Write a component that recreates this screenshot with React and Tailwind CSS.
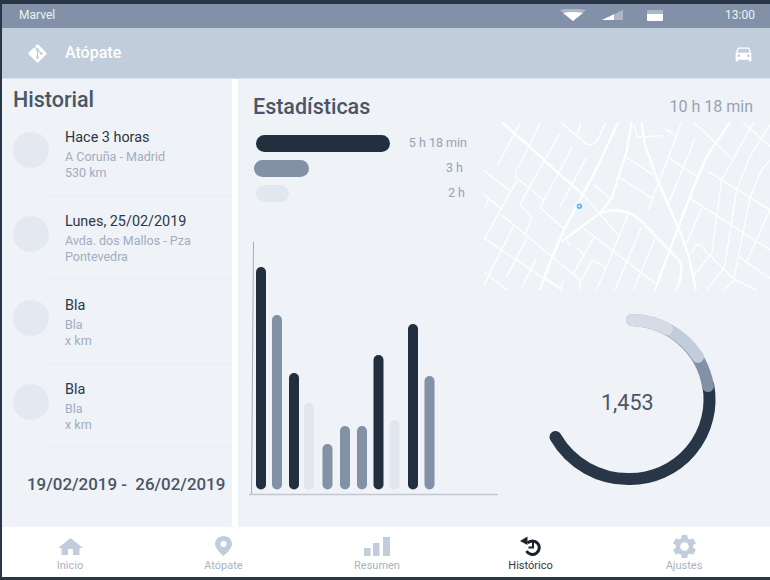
import { FaGitAlt } from "react-icons/fa";
import { MdDirectionsCar, MdSettings } from "react-icons/md";

const font = { fontFamily: "Roboto, sans-serif" };

const trips = [
  { title: "Hace 3 horas", lines: ["A Coruña - Madrid", "530 km"] },
  { title: "Lunes, 25/02/2019", lines: ["Avda. dos Mallos - Pza", "Pontevedra"] },
  { title: "Bla", lines: ["Bla", "x km"] },
  { title: "Bla", lines: ["Bla", "x km"] },
];

const chartBars = [
  [256, 267, "#222f3f"],
  [272, 315, "#8291a5"],
  [289, 373, "#222f3f"],
  [304, 403, "#e2e7ef"],
  [322.5, 444, "#8291a5"],
  [340, 426, "#8291a5"],
  [357, 426, "#8291a5"],
  [373.5, 355, "#222f3f"],
  [389.5, 420, "#e2e7ef"],
  [408, 324, "#222f3f"],
  [424.5, 376, "#8291a5"],
];

const thickRoads = [
  "M65 22L145 92L235 175L310 240",
  "M415 22L350 160L250 350L215 430L180 525",
  "M455 22L440 110L395 250L360 295L245 380",
  "M360 295Q410 275 460 300L490 325L600 440Q612 470 590 525",
  "M485 22L495 90L530 190L600 350L625 420L648 525",
  "M750 22L680 125L640 220L590 350L525 525",
];

const thinRoads = [
  "M122 22L52 152",
  "M182 22L108 170Q105 190 118 195L190 255",
  "M238 58L120 268L155 308L135 360",
  "M278 95L180 278L255 345",
  "M318 130L238 280",
  "M242 22L320 88Q335 95 350 80L378 22",
  "M302 22L292 60",
  "M12 168L95 232",
  "M112 195L15 370",
  "M12 240L68 285",
  "M25 255L12 285",
  "M62 298L300 495L300 525",
  "M12 370L240 522",
  "M100 335L12 510",
  "M140 370L78 490",
  "M168 433L125 518",
  "M12 470L80 525",
  "M195 490L245 522",
  "M250 498L242 525",
  "M310 340L525 505",
  "M340 370L280 478",
  "M290 398L310 418",
  "M262 378L272 395",
  "M335 435L378 458",
  "M335 435L302 500",
  "M310 240L415 360",
  "M340 208L390 250",
  "M445 298L350 525",
  "M485 335L405 525",
  "M525 372L460 525",
  "M440 128L520 180",
  "M418 188L515 250",
  "M605 22L505 285",
  "M555 42L585 60",
  "M645 72L565 268",
  "M568 130L655 188",
  "M462 30L472 68L548 62",
  "M642 22L755 132",
  "M820 22L725 195L695 420",
  "M870 30L810 125L770 225L733 460",
  "M870 135L845 165L810 250L762 490",
  "M788 22L870 95",
  "M688 172L870 285",
  "M632 252L870 405",
  "M665 280L620 385",
  "M655 385L730 462L765 495L830 525",
  "M655 385L628 420",
  "M692 420L640 482",
  "M730 462L680 525",
  "M765 495L732 525",
  "M775 425L870 490",
  "M870 285L800 440",
];

function StatusBar() {
  return (
    <div className="flex h-6 items-center bg-[#8291a8] pb-[2px] pl-[17px] pr-[15px] text-xs text-[#eef1f6]">
      <span>Marvel</span>
      <div className="ml-auto mr-[62px] flex items-center">
        <svg width="26" height="12" viewBox="0 0 26 12">
          <path d="M0 1Q13 -2 26 1L13 12Z" fill="#fff" opacity="0.35" />
          <path d="M3 4Q13 2 23 4L13 12Z" fill="#fff" />
        </svg>
        <svg width="22" height="10" viewBox="0 0 22 10" className="ml-4">
          <path d="M0 10L21 0V10Z" fill="#fff" opacity="0.35" />
          <path d="M0 10L12 4.3V10Z" fill="#fff" />
        </svg>
        <svg width="16" height="11" viewBox="0 0 16 11" className="ml-[23px]">
          <rect width="16" height="11" rx="1" fill="#fff" opacity="0.35" />
          <path d="M0 4H16V10Q16 11 15 11H1Q0 11 0 10Z" fill="#fff" />
        </svg>
      </div>
      <span>13:00</span>
    </div>
  );
}

function AppBar() {
  return (
    <div className="flex h-[51px] items-center border-b border-[#d9e0e9] bg-[#c1cddb] pl-[25px] pr-4 text-white">
      <FaGitAlt size={21} />
      <span className="ml-[17px] text-base font-medium">Atópate</span>
      <MdDirectionsCar size={21} className="ml-auto" />
    </div>
  );
}

function HistoryPanel() {
  return (
    <aside className="flex w-[230px] shrink-0 flex-col bg-[#eff2f7]">
      <h2 className="pl-[11px] pt-[6px] text-[21.5px] leading-[29px] font-medium text-[#4a5565]">Historial</h2>
      <ul className="-mt-[2px]">
        {trips.map((trip, i) => (
          <li key={i} className="relative flex h-[84px] gap-[16px] pl-[11px] pt-4">
            <div className="mt-1 h-9 w-9 shrink-0 rounded-full bg-[#e4e9f1]" />
            <div>
              <div className="text-[14.4px] leading-[20px] text-[#2d3748]">{trip.title}</div>
              <div className="mt-[1px] text-[12.5px] leading-4 text-[#a0aec0]">
                {trip.lines.map((line, j) => (
                  <div key={j}>{line}</div>
                ))}
              </div>
            </div>
            <div className="absolute bottom-0 left-[44px] right-0 h-px bg-[#ebeff4]" />
          </li>
        ))}
      </ul>
      <div className="mt-[24px] whitespace-pre pl-[25px] text-[16.9px] font-medium text-[#4a5565]">19/02/2019 -  26/02/2019</div>
    </aside>
  );
}

function DurationBars() {
  const rows = [
    { bar: "ml-[3px] w-[134px] bg-[#222f3f]", label: "5 h 18 min", pad: "pr-0" },
    { bar: "ml-[1px] w-[55px] bg-[#8291a5]", label: "3 h", pad: "pr-[4px]" },
    { bar: "ml-[3px] w-[33px] bg-[#e2e7ef]", label: "2 h", pad: "pr-[2px]" },
  ];
  return (
    <div className="flex w-[214px] flex-col gap-[8px]">
      {rows.map((row) => (
        <div key={row.label} className="flex h-[17px] items-center">
          <div className={`h-[17px] rounded-full ${row.bar}`} />
          <span className={`ml-auto text-[12.5px] text-[#97a3b5] ${row.pad}`}>{row.label}</span>
        </div>
      ))}
    </div>
  );
}

function BarChart() {
  return (
    <svg width="260" height="262" viewBox="245 238 260 262" className="mt-[36px] -ml-[8px]">
      <path d="M253.5 242L251.5 494" stroke="#a6adb8" strokeWidth="1" fill="none" />
      <path d="M249 494.5H498" stroke="#c3c9d2" strokeWidth="1.5" fill="none" />
      {chartBars.map(([x, top, color]) => (
        <rect key={x} x={x} y={top} width="10" height={489.5 - top} rx="5" fill={color} />
      ))}
    </svg>
  );
}

function RoadMap() {
  return (
    <svg width="286" height="168" viewBox="12 22 858 503" className="block">
      <g fill="none" stroke="#fff" strokeLinejoin="round">
        {thinRoads.map((d) => (
          <path key={d} d={d} strokeWidth="4" />
        ))}
        {thickRoads.map((d) => (
          <path key={d} d={d} strokeWidth="7" />
        ))}
      </g>
      <circle cx="298" cy="274" r="8" fill="#4fb8f5" />
      <circle cx="298" cy="274" r="3" fill="#fff" />
    </svg>
  );
}

function Gauge() {
  const arc = (x, y) => `M${x} ${y}A79.5 79.5 0 0 0 632 320`;
  return (
    <div className="relative ml-[56px] mt-5 h-[180px] w-[180px]">
      <svg width="180" height="180" viewBox="540 310 180 180" className="block" fill="none" strokeWidth="12" strokeLinecap="round">
        <path d="M555.5 437A84 84 0 0 0 630 479A79.5 79.5 0 0 0 708.2 385" stroke="#283648" />
        <path d="M708 386A79.5 79.5 0 0 0 632 320" stroke="#8291a5" />
        <path d={arc(698, 357)} stroke="#c1cddb" />
        <path d={arc(667, 329)} stroke="#d5dce6" />
      </svg>
      <span className="absolute left-[61px] top-[78px] text-[21.5px] leading-[29px] text-[#4a5565]">1,453</span>
    </div>
  );
}

function StatsPanel() {
  return (
    <section className="ml-[6px] flex min-w-0 flex-1 flex-col bg-[#eff2f7]">
      <div className="flex items-center justify-between pl-[15px] pr-[17px] pt-[13px]">
        <h2 className="text-[21.5px] leading-[29px] font-medium text-[#4a5565]">Estadísticas</h2>
        <span className="text-base text-[#97a3b5]">10 h 18 min</span>
      </div>
      <div className="flex">
        <div className="w-[246px] shrink-0 pl-[15px] pt-[14px]">
          <DurationBars />
          <BarChart />
        </div>
        <div className="pt-[1px]">
          <RoadMap />
          <Gauge />
        </div>
      </div>
    </section>
  );
}

function HomeIcon() {
  return (
    <svg width="25" height="17" viewBox="0 0 25 17" fill="currentColor">
      <path d="M12.5 0L25 10H21.5V17H15V11H10V17H3.5V10H0Z" />
    </svg>
  );
}

function PinIcon() {
  return (
    <svg width="17" height="20" viewBox="0 0 17 20" fill="currentColor">
      <path
        fillRule="evenodd"
        d="M8.5 0C13.2 0 17 3.6 17 8C17 13 8.5 20 8.5 20C8.5 20 0 13 0 8C0 3.6 3.8 0 8.5 0ZM8.5 5A3 3 0 1 0 8.5 11A3 3 0 1 0 8.5 5Z"
      />
    </svg>
  );
}

function BarsIcon() {
  return (
    <svg width="26" height="19" viewBox="0 0 26 19" fill="currentColor">
      <rect x="0" y="11" width="6.5" height="8" />
      <rect x="9" y="6" width="6.5" height="13" />
      <rect x="19" y="0" width="7" height="19" />
    </svg>
  );
}

function HistoryIcon() {
  return (
    <svg width="24" height="20" viewBox="5 4 24 20" fill="none" stroke="currentColor">
      <path d="M13.5 11A6.8 6.8 0 1 1 12.5 19" strokeWidth="3" />
      <path d="M6 9L13.5 4.5V13Z" fill="currentColor" stroke="none" />
      <path d="M19 10V15.5H14.5" strokeWidth="2" />
    </svg>
  );
}

function BottomNav() {
  const items = [
    { label: "Inicio", icon: <HomeIcon /> },
    { label: "Atópate", icon: <PinIcon /> },
    { label: "Resumen", icon: <BarsIcon /> },
    { label: "Histórico", icon: <HistoryIcon />, active: true },
    { label: "Ajustes", icon: <MdSettings size={29} /> },
  ];
  return (
    <nav className="flex h-[50px] justify-between bg-white pl-[18px] pr-[36px]">
      {items.map((item) => (
        <div
          key={item.label}
          className={`flex w-[100px] flex-col items-center ${item.active ? "text-[#1a202c]" : "text-[#c1cddb]"}`}
        >
          <div className="mt-[9px] flex h-5 items-center">{item.icon}</div>
          <span className={`mt-1 text-[11px] leading-[12px] ${item.active ? "text-[#2d3748]" : "text-[#a7b3c4]"}`}>{item.label}</span>
        </div>
      ))}
    </nav>
  );
}

export default function App() {
  return (
    <div className="h-[580px] w-[770px] overflow-hidden bg-[#2a3648] pl-[2px] pt-[4px]" style={font}>
      <StatusBar />
      <AppBar />
      <main className="flex h-[448px] bg-white">
        <HistoryPanel />
        <StatsPanel />
      </main>
      <BottomNav />
    </div>
  );
}
